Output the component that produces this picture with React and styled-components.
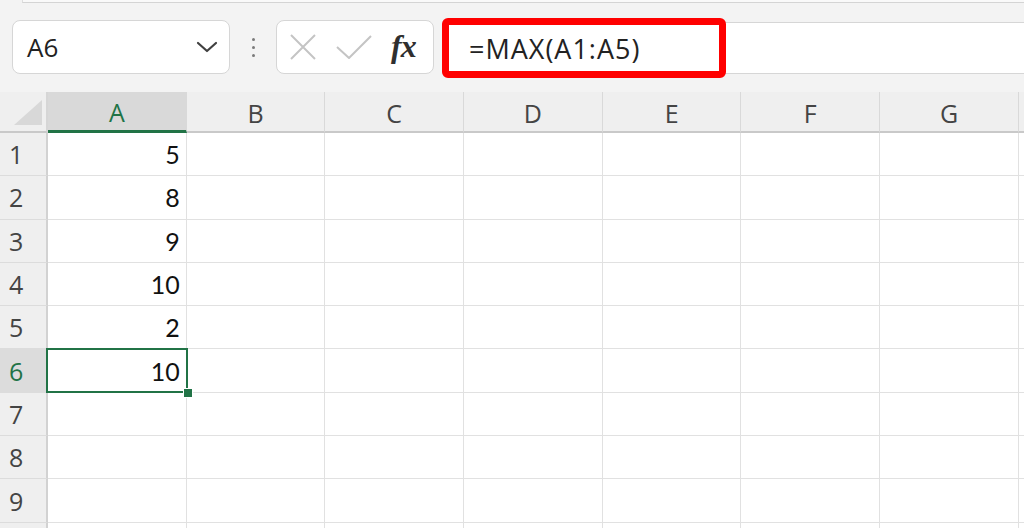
import React from "react";
import styled, { createGlobalStyle } from "styled-components";

const GREEN = "#217346";
const UI_FONT = `"Open Sans", "Noto Sans", "Liberation Sans", sans-serif`;
const CELL_FONT = `Lato, "Open Sans", sans-serif`;

const Global = createGlobalStyle`
  html, body { margin: 0; padding: 0; }
  body { background: #f3f3f3; overflow: hidden; font-family: ${UI_FONT}; }
`;

const Page = styled.div`
  width: 1024px;
  height: 528px;
  display: flex;
  flex-direction: column;
  overflow: hidden;
  & > * { flex-shrink: 0; }
`;

const RibbonEdge = styled.div`
  height: 2px;
  margin-left: 22px;
  background: #f9f9f9;
  border-bottom: 1px solid #d4d4d4;
  border-left: 1px solid #dedede;
`;

const FormulaBar = styled.div`
  margin-top: 17px;
  height: 54px;
  display: flex;
  align-items: stretch;
  padding-left: 12px;
`;

const NameBox = styled.div`
  width: 218px;
  background: #fff;
  border: 1px solid #d6d6d6;
  border-radius: 8px;
  display: flex;
  align-items: center;
  justify-content: space-between;
  padding: 0 11px 0 14px;
  box-sizing: border-box;
  font-size: 26px;
  color: #222;
`;

const Grip = styled.div`
  width: 46px;
  display: flex;
  flex-direction: column;
  align-items: center;
  justify-content: center;
  gap: 5px;
`;

const Dot = styled.span`
  width: 3px;
  height: 3px;
  border-radius: 50%;
  background: #7a7a7a;
`;

const FnButtons = styled.div`
  width: 158px;
  background: #fff;
  border: 1px solid #d6d6d6;
  border-radius: 8px;
  box-sizing: border-box;
  display: flex;
  align-items: center;
  padding-left: 12px;
  gap: 19px;
`;

const Fx = styled.span`
  font-family: "Liberation Serif", "DejaVu Serif", serif;
  font-style: italic;
  font-weight: bold;
  font-size: 32px;
  color: #2f2f2f;
  letter-spacing: -1px;
  line-height: 1;
  margin-top: -2px;
`;

const FormulaInput = styled.div`
  position: relative;
  flex: 1;
  margin: 2px 0 0 8px;
  background: #fff;
  border: 1px solid #d6d6d6;
  border-right: none;
  border-radius: 3px 0 0 3px;
  display: flex;
  align-items: center;
  padding-left: 26px;
  font-size: 27px;
  letter-spacing: 1px;
  color: #222;
`;

const Highlight = styled.div`
  position: absolute;
  left: -1px;
  top: -5px;
  width: 284px;
  height: 60px;
  box-sizing: border-box;
  border: 7px solid #ff0000;
  border-radius: 6px;
  pointer-events: none;
`;

const Sheet = styled.div`
  margin-top: 18px;
  display: grid;
  grid-template-columns: 48px repeat(7, 138.7px) 1fr;
  grid-template-rows: 41px repeat(10, 43.3px);
  background: #fff;
`;

const Corner = styled.div`
  background: #efefef;
  border-right: 2px solid #d6d6d6;
  border-bottom: 2px solid #c9c9c9;
  display: flex;
  align-items: flex-end;
  justify-content: flex-end;
  padding: 0 4px 6px 0;
`;

const ColHead = styled.div`
  background: ${(p) => (p.$active ? "#d9d9d9" : "#efefef")};
  color: ${(p) => (p.$active ? GREEN : "#444")};
  border-right: 1px solid #d9d9d9;
  border-bottom: ${(p) => (p.$active ? `3px solid ${GREEN}` : "2px solid #c9c9c9")};
  display: flex;
  align-items: center;
  justify-content: center;
  font-size: 25px;
  padding-top: 2px;
  box-sizing: border-box;
`;

const RowHead = styled.div`
  background: ${(p) => (p.$active ? "#dcdcdc" : "#efefef")};
  color: ${(p) => (p.$active ? GREEN : "#444")};
  border-right: 2px solid #d2d2d2;
  border-bottom: 1px solid #dcdcdc;
  display: flex;
  align-items: center;
  padding-left: 9px;
  font-size: 25px;
  box-sizing: border-box;
`;

const Cell = styled.div`
  position: relative;
  border-right: 1px solid #e1e1e1;
  border-bottom: 1px solid #e1e1e1;
  display: flex;
  align-items: center;
  justify-content: flex-end;
  padding-right: 6px;
  font-family: ${CELL_FONT};
  font-size: 25px;
  color: #111;
  box-sizing: border-box;
`;

const Selection = styled.div`
  position: absolute;
  z-index: 2;
  left: -2px;
  top: -1px;
  right: -2px;
  bottom: -1px;
  border: 2px solid ${GREEN};
  pointer-events: none;
`;

const FillHandle = styled.div`
  position: absolute;
  right: -7px;
  bottom: -7px;
  width: 8px;
  height: 8px;
  background: ${GREEN};
  border: 1px solid #fff;
`;

const ChevronIcon = () => (
  <svg width="22" height="12" viewBox="0 0 22 12">
    <path d="M2 2 L11 10 L20 2" fill="none" stroke="#404040" strokeWidth="2.2" strokeLinecap="round" strokeLinejoin="round" />
  </svg>
);

const CancelIcon = () => (
  <svg width="28" height="26" viewBox="0 0 28 26">
    <path d="M2 1 L26 25 M26 1 L2 25" stroke="#c4c4c4" strokeWidth="2" fill="none" />
  </svg>
);

const CheckIcon = () => (
  <svg width="36" height="24" viewBox="0 0 36 24">
    <path d="M1 12 L13 23 L35 1" stroke="#c4c4c4" strokeWidth="2" fill="none" />
  </svg>
);

const CornerTriangle = () => (
  <svg width="28" height="25" viewBox="0 0 28 25">
    <polygon points="28,0 28,25 0,25" fill="#d8d8d8" />
  </svg>
);

const columns = ["A", "B", "C", "D", "E", "F", "G", "H"];
const values = { 1: "5", 2: "8", 3: "9", 4: "10", 5: "2", 6: "10" };
const ACTIVE_ROW = 6;

export default function App() {
  const rows = Array.from({ length: 10 }, (_, i) => i + 1);
  return (
    <>
      <Global />
      <Page>
        <RibbonEdge />
        <FormulaBar>
          <NameBox>
            <span>A6</span>
            <ChevronIcon />
          </NameBox>
          <Grip>
            <Dot />
            <Dot />
            <Dot />
          </Grip>
          <FnButtons>
            <CancelIcon />
            <CheckIcon />
            <Fx>fx</Fx>
          </FnButtons>
          <FormulaInput>
            <Highlight />
            =MAX(A1:A5)
          </FormulaInput>
        </FormulaBar>
        <Sheet>
          <Corner>
            <CornerTriangle />
          </Corner>
          {columns.map((c) => (
            <ColHead key={c} $active={c === "A"}>
              {c === "H" ? "" : c}
            </ColHead>
          ))}
          {rows.map((r) => (
            <React.Fragment key={r}>
              <RowHead $active={r === ACTIVE_ROW}>{r < 10 ? r : ""}</RowHead>
              {columns.map((c) => (
                <Cell key={c}>
                  {c === "A" ? values[r] || "" : ""}
                  {c === "A" && r === ACTIVE_ROW && (
                    <Selection>
                      <FillHandle />
                    </Selection>
                  )}
                </Cell>
              ))}
            </React.Fragment>
          ))}
        </Sheet>
      </Page>
    </>
  );
}
